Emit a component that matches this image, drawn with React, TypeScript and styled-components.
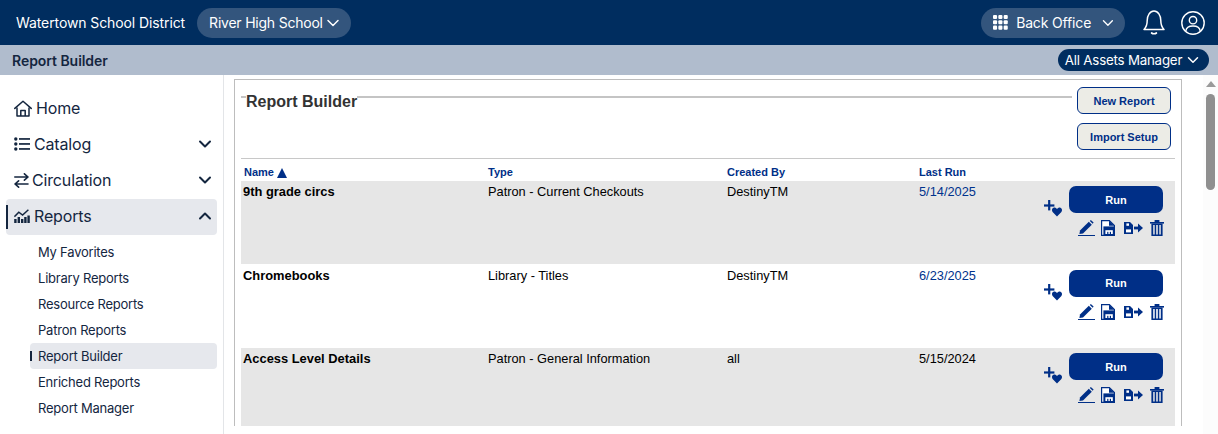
import React from "react";
import styled, { createGlobalStyle } from "styled-components";
import { ChevronDown, ChevronUp } from "lucide-react";

const GlobalStyle = createGlobalStyle`
  html, body { margin: 0; padding: 0; height: 100%; overflow: hidden; background: #fff; }
  body { font-family: "Inter", "Liberation Sans", sans-serif; }
  * { box-sizing: border-box; }
`;

const reports = [
  { name: "9th grade circs", type: "Patron - Current Checkouts", by: "DestinyTM", run: "5/14/2025", link: true, shaded: true },
  { name: "Chromebooks", type: "Library - Titles", by: "DestinyTM", run: "6/23/2025", link: true, shaded: false },
  { name: "Access Level Details", type: "Patron - General Information", by: "all", run: "5/15/2024", link: false, shaded: true },
];

const subItems = ["My Favorites", "Library Reports", "Resource Reports", "Patron Reports", "Report Builder", "Enriched Reports", "Report Manager"];

const GridIcon = () => (
  <svg width="17" height="17" viewBox="0 0 17 17" fill="#fff">
    {[0, 6, 12].flatMap((y) => [0, 6, 12].map((x) => <rect key={`${x}-${y}`} x={x} y={y} width="4.6" height="4.6" rx="1.2" />))}
  </svg>
);

const BellIcon = () => (
  <svg width="22" height="25" viewBox="0 0 22 25" fill="none" stroke="#fff" strokeWidth="1.5" strokeLinejoin="round" strokeLinecap="round">
    <path d="M1 19.5 C3.6 17 4.2 14.6 4.2 10.6 C4.2 5.6 7 1 11 1 C15 1 17.8 5.6 17.8 10.6 C17.8 14.6 18.4 17 21 19.5 Z" />
    <path d="M8.6 23 C9.8 24 12.2 24 13.4 23" strokeWidth="1.7" />
  </svg>
);

const UserIcon = () => (
  <svg width="24" height="24" viewBox="0 0 24 24" fill="none" stroke="#fff" strokeWidth="1.4">
    <circle cx="12" cy="12" r="11.2" />
    <circle cx="12" cy="9.2" r="3.7" />
    <path d="M4.8 20 C5.2 16.4 8 15 12 15 C16 15 18.8 16.4 19.2 20" />
  </svg>
);

const HomeIcon = () => (
  <svg width="18" height="17" viewBox="0 0 18 17" fill="none" stroke="#14263f" strokeWidth="1.5" strokeLinejoin="round">
    <path d="M0.8 8.4 L9 1.2 L17.2 8.4" strokeLinecap="round" />
    <path d="M3 7.4 V16 H15 V7.4" />
    <path d="M6.8 16 V10.4 H11.2 V16" />
  </svg>
);

const ListIcon = () => (
  <svg width="16" height="14" viewBox="0 0 16 14" fill="#14263f">
    <circle cx="1.8" cy="2" r="1.7" /><circle cx="1.8" cy="7" r="1.7" /><circle cx="1.8" cy="12" r="1.7" />
    <rect x="5" y="1.1" width="11" height="1.7" /><rect x="5" y="6.1" width="11" height="1.7" /><rect x="5" y="11.1" width="11" height="1.7" />
  </svg>
);

const SwapIcon = () => (
  <svg width="15" height="15" viewBox="0 0 15 15" fill="none" stroke="#14263f" strokeWidth="1.6" strokeLinecap="round" strokeLinejoin="round">
    <path d="M0.8 4 H14 M10.4 0.8 L14 4 L10.4 7.2" />
    <path d="M14 11 H1 M4.6 7.8 L1 11 L4.6 14.2" />
  </svg>
);

const ChartIcon = () => (
  <svg width="16" height="14" viewBox="0 0 16 14" fill="#14263f">
    <rect x="0.2" y="10" width="2.4" height="4" /><rect x="3.6" y="8" width="2.4" height="6" /><rect x="7" y="10" width="2.4" height="4" />
    <rect x="10.2" y="8" width="2.4" height="6" /><rect x="13.4" y="6.5" width="2.4" height="7.5" />
    <path d="M0.4 7.6 L4.8 3.2 L8.6 6 L14.4 0.8" fill="none" stroke="#14263f" strokeWidth="1.5" />
  </svg>
);

const FavIcon = () => (
  <svg width="18" height="17" viewBox="0 0 18 17" fill="#002f87">
    <rect x="0" y="4.4" width="10.4" height="2.2" /><rect x="4.1" y="0" width="2.2" height="10.4" />
    <path d="M13 16.6 L8.6 12 C7 9.6 8.8 7 11 7.6 C12 7.9 12.6 8.5 13 9.1 C13.4 8.5 14 7.9 15 7.6 C17.2 7 19 9.6 17.4 12 Z" />
  </svg>
);

const EditIcon = () => (
  <svg width="17" height="16" viewBox="0 0 17 16" fill="#002f87">
    <path d="M2 10.6 L10.8 1.8 L13.8 4.8 L5 13.4 L1.4 14 Z" />
    <path d="M11.8 0.9 L12.8 0 L15.6 2.6 L14.7 3.8 Z" />
    <rect x="0" y="15" width="17" height="1" />
  </svg>
);

const SaveDocIcon = () => (
  <svg width="14" height="16" viewBox="0 0 14 16">
    <path d="M0.6 0.6 H8.4 L13.4 5.4 V15.4 H0.6 Z" fill="#fff" stroke="#002f87" strokeWidth="1.2" />
    <path d="M8 0.6 V5.8 H13.4 Z" fill="#002f87" />
    <rect x="2.4" y="6.4" width="11.6" height="9.6" fill="#002f87" />
    <rect x="4.4" y="10.2" width="7.4" height="3.8" fill="#fff" />
    <rect x="6.2" y="11.8" width="1.2" height="2.2" fill="#002f87" />
    <rect x="8.8" y="11.8" width="1.2" height="2.2" fill="#002f87" />
  </svg>
);

const ExportIcon = () => (
  <svg width="19" height="12" viewBox="0 0 19 12" fill="#002f87">
    <path d="M0 0 H6 L9 3 V12 H0 Z" />
    <rect x="2.4" y="1.4" width="2.6" height="2.4" fill="#fff" />
    <rect x="2" y="7.4" width="5" height="3" fill="#fff" />
    <rect x="10" y="4.6" width="4.4" height="2.8" />
    <path d="M14 1.6 L19 6 L14 10.4 Z" />
  </svg>
);

const TrashIcon = () => (
  <svg width="14" height="16" viewBox="0 0 14 16" fill="#002f87">
    <rect x="0" y="2" width="14" height="1.6" /><rect x="4.6" y="0" width="4.8" height="2.4" />
    <path d="M1.4 3.6 H12.6 V16 H1.4 Z M3.2 5 V14.6 H4.7 V5 Z M6.2 5 V14.6 H7.8 V5 Z M9.3 5 V14.6 H10.8 V5 Z" fillRule="evenodd" />
  </svg>
);

const NavItem = ({ icon, label, caret, active, iconWidth }: { icon: React.ReactNode; label: string; caret?: "up" | "down"; active?: boolean; iconWidth: number }) => (
  <NavRow $active={active}>
    <NavIcon $width={iconWidth}>{icon}</NavIcon>
    <NavLabel>{label}</NavLabel>
    {caret === "down" && <ChevronDown size={20} strokeWidth={2.4} color="#14263f" />}
    {caret === "up" && <ChevronUp size={20} strokeWidth={2.4} color="#14263f" />}
  </NavRow>
);

export default function App() {
  return (
    <Page>
      <GlobalStyle />
      <TopBar>
        <District>Watertown School District</District>
        <Pill>River High School <ChevronDown size={20} strokeWidth={1.8} /></Pill>
        <TopSpacer />
        <BackOffice><GridIcon /><span>Back Office</span><ChevronDown size={20} strokeWidth={1.8} /></BackOffice>
        <BellIcon />
        <UserSlot><UserIcon /></UserSlot>
      </TopBar>
      <SubBar>
        <SubTitle>Report Builder</SubTitle>
        <AssetsPill>All Assets Manager <ChevronDown size={18} strokeWidth={2} /></AssetsPill>
      </SubBar>
      <Body>
        <Sidebar>
          <NavItem icon={<HomeIcon />} label="Home" iconWidth={22} />
          <NavItem icon={<ListIcon />} label="Catalog" caret="down" iconWidth={20} />
          <NavItem icon={<SwapIcon />} label="Circulation" caret="down" iconWidth={18} />
          <NavItem icon={<ChartIcon />} label="Reports" caret="up" active iconWidth={20} />
          <SubList>
            {subItems.map((s) => (
              <SubItem key={s} $active={s === "Report Builder"}>{s}</SubItem>
            ))}
          </SubList>
        </Sidebar>
        <Main>
          <Panel>
            <TitleRow>
              <RuleStub />
              <PanelTitle>Report Builder</PanelTitle>
              <Rule />
              <Actions>
                <GhostButton>New Report</GhostButton>
                <GhostButton>Import Setup</GhostButton>
              </Actions>
            </TitleRow>
            <HeadRow>
              <HeadCell>Name <SortMark /></HeadCell>
              <HeadCell>Type</HeadCell>
              <HeadCell>Created By</HeadCell>
              <HeadCell>Last Run</HeadCell>
            </HeadRow>
            {reports.map((r) => (
              <Row key={r.name} $shaded={r.shaded}>
                <NameCell>{r.name}</NameCell>
                <Cell>{r.type}</Cell>
                <Cell>{r.by}</Cell>
                <RunCell $link={r.link}>{r.run}</RunCell>
                <RowTools>
                  <FavWrap><FavIcon /></FavWrap>
                  <RunStack>
                    <RunButton>Run</RunButton>
                    <IconRow><EditIcon /><SaveDocIcon /><ExportIcon /><TrashIcon /></IconRow>
                  </RunStack>
                </RowTools>
              </Row>
            ))}
          </Panel>
        </Main>
        <ScrollTrack>
          <ScrollArrow />
          <ScrollThumb />
        </ScrollTrack>
      </Body>
    </Page>
  );
}

const Page = styled.div`
  width: 1218px;
  height: 434px;
  overflow: hidden;
  display: flex;
  flex-direction: column;
`;

const TopBar = styled.header`
  height: 45px;
  flex: none;
  background: #002d5f;
  color: #fff;
  display: flex;
  align-items: center;
  padding: 0 13px 0 16px;
  gap: 12px;
`;

const District = styled.div`
  font-size: 14px;
  letter-spacing: -0.1px;
  white-space: nowrap;
`;

const Pill = styled.div`
  height: 30px;
  padding: 0 8px 0 12px;
  border-radius: 15px;
  background: #33557d;
  display: flex;
  align-items: center;
  font-size: 14px;
  letter-spacing: -0.22px;
  white-space: nowrap;
`;

const TopSpacer = styled.div`
  flex: 1;
`;

const BackOffice = styled(Pill)`
  width: 144px;
  gap: 8px;
  margin-right: 6px;
  padding-left: 12px;
  letter-spacing: -0.15px;
`;

const UserSlot = styled.span`
  display: flex;
  margin-left: 4px;
`;

const SubBar = styled.div`
  height: 30px;
  flex: none;
  background: #b0bccd;
  display: flex;
  align-items: center;
  justify-content: space-between;
  padding: 0 9px 0 12px;
`;

const SubTitle = styled.div`
  font-size: 14px;
  font-weight: 600;
  color: #14263f;
  letter-spacing: -0.05px;
`;

const AssetsPill = styled.div`
  height: 22px;
  width: 151px;
  border-radius: 11px;
  background: #002d5f;
  color: #fff;
  font-size: 13.3px;
  letter-spacing: -0.2px;
  display: flex;
  align-items: center;
  justify-content: center;
  gap: 2px;
  white-space: nowrap;
`;

const Body = styled.div`
  flex: 1;
  display: flex;
  min-height: 0;
`;

const Sidebar = styled.nav`
  width: 224px;
  flex: none;
  border-right: 1px solid #e3e5e8;
  padding: 16px 6px 0 6px;
`;

const NavRow = styled.div<{ $active?: boolean }>`
  height: 36px;
  display: flex;
  align-items: center;
  padding: 0 2px 2px 8px;
  border-radius: 4px;
  position: relative;
  background: ${(p) => (p.$active ? "#e6e8ed" : "transparent")};
  ${(p) =>
    p.$active &&
    `&::before { content: ""; position: absolute; left: 0; top: 6px; bottom: 6px; width: 2px; background: #14263f; }`}
`;

const NavIcon = styled.span<{ $width: number }>`
  width: ${(p) => p.$width}px;
  display: flex;
  align-items: center;
`;

const NavLabel = styled.span`
  flex: 1;
  font-size: 16px;
  color: #14263f;
  letter-spacing: -0.15px;
`;

const SubList = styled.div`
  padding: 4px 0 0 24px;
`;

const SubItem = styled.div<{ $active?: boolean }>`
  height: 26px;
  display: flex;
  align-items: center;
  padding-left: 8px;
  font-size: 13px;
  letter-spacing: -0.22px;
  color: #14263f;
  border-radius: 4px;
  position: relative;
  background: ${(p) => (p.$active ? "#e6e8ed" : "transparent")};
  ${(p) =>
    p.$active &&
    `&::before { content: ""; position: absolute; left: 0; top: 8px; bottom: 8px; width: 2px; background: #14263f; }`}
`;

const Main = styled.main`
  flex: 1;
  min-width: 0;
  height: 351px;
  overflow: hidden;
  padding: 4px 0 0 10px;
`;

const Panel = styled.section`
  width: 948px;
  height: 500px;
  border: 1px solid #bdbdbd;
  padding: 9px 6px 0 6px;
  font-family: "Liberation Sans", Arial, sans-serif;
`;

const TitleRow = styled.div`
  height: 70px;
  display: flex;
  align-items: flex-start;
  border-bottom: 1px solid #c8c8c8;
`;

const RuleStub = styled.div`
  width: 5px;
  height: 2px;
  margin-top: 7px;
  background: #c4c4c4;
`;

const PanelTitle = styled.h1`
  margin: 4px 0 0 0;
  font-size: 16px;
  line-height: 18px;
  font-weight: 700;
  color: #333;
`;

const Rule = styled.div`
  flex: 1;
  height: 2px;
  margin-top: 7px;
  background: #c4c4c4;
`;

const Actions = styled.div`
  width: 98px;
  display: flex;
  flex-direction: column;
  align-items: flex-start;
  gap: 9px;
  margin: -2px 0 0 5px;
`;

const GhostButton = styled.button`
  width: 94px;
  height: 27px;
  padding: 0;
  border: 1px solid #002f87;
  border-radius: 6px;
  background: #ecece6;
  color: #002f87;
  font-family: "Liberation Sans", Arial, sans-serif;
  font-size: 11px;
  font-weight: 700;
`;

const tableCols = "244px 239px 192px 1fr";

const HeadRow = styled.div`
  height: 21.5px;
  display: grid;
  grid-template-columns: ${tableCols};
  align-items: end;
  padding: 0 0 1.5px 3px;
`;

const HeadCell = styled.div`
  font-size: 11px;
  line-height: 13px;
  font-weight: 700;
  color: #002f87;
  display: flex;
  align-items: center;
  gap: 3px;
`;

const SortMark = styled.span`
  width: 0;
  height: 0;
  border-left: 5px solid transparent;
  border-right: 5px solid transparent;
  border-bottom: 10px solid #002f87;
`;

const Row = styled.div<{ $shaded?: boolean }>`
  height: 83.5px;
  display: grid;
  grid-template-columns: ${tableCols};
  padding: 3.5px 0 0 2px;
  position: relative;
  background: ${(p) => (p.$shaded ? "#e6e6e6" : "#fff")};
  font-size: 12.8px;
  line-height: 15px;
  color: #000;
`;

const Cell = styled.div`
  margin-left: 1px;
`;

const NameCell = styled.div`
  font-weight: 700;
  font-size: 12.9px;
`;

const RunCell = styled(Cell)<{ $link?: boolean }>`
  color: ${(p) => (p.$link ? "#00338d" : "#000")};
`;

const RowTools = styled.div`
  position: absolute;
  top: 5.5px;
  right: 12px;
  display: flex;
  align-items: flex-start;
  gap: 7px;
`;

const FavWrap = styled.div`
  margin-top: 14px;
`;

const RunStack = styled.div`
  width: 94px;
  display: flex;
  flex-direction: column;
  gap: 7px;
`;

const RunButton = styled.button`
  height: 27px;
  padding: 0;
  border: none;
  border-radius: 7px;
  background: #002f87;
  color: #fff;
  font-family: "Liberation Sans", Arial, sans-serif;
  font-size: 11px;
  font-weight: 700;
`;

const IconRow = styled.div`
  display: grid;
  grid-template-columns: 23px 23px 26px 14px;
  align-items: center;
  height: 16px;
  padding-left: 9px;
`;

const ScrollTrack = styled.div`
  width: 15px;
  flex: none;
  margin-left: 21px;
  display: flex;
  flex-direction: column;
  align-items: center;
  padding-top: 6px;
  background: #fcfcfc;
`;

const ScrollArrow = styled.div`
  width: 0;
  height: 0;
  border-left: 5px solid transparent;
  border-right: 5px solid transparent;
  border-bottom: 6px solid #9a9a9a;
`;

const ScrollThumb = styled.div`
  width: 9px;
  height: 96px;
  margin-top: 7px;
  border-radius: 5px;
  background: #8f8f8f;
`;
